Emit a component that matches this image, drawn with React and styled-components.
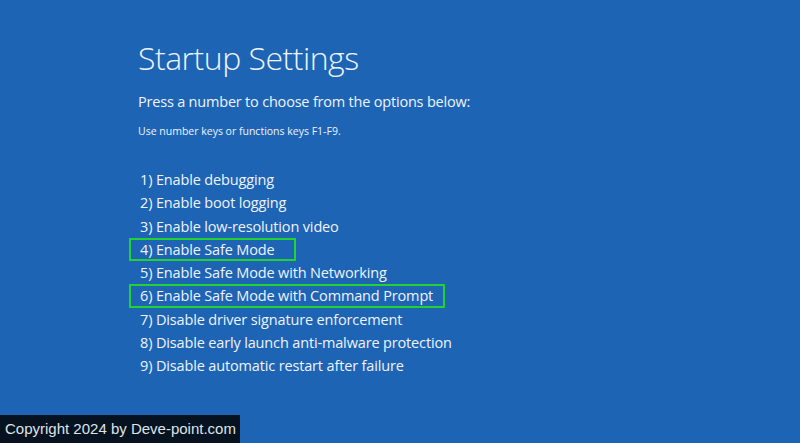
import styled, { createGlobalStyle } from 'styled-components';

const Global = createGlobalStyle`
  html, body { margin: 0; padding: 0; }
  body { background: #1e64b4; }
`;

const Screen = styled.div`
  position: relative;
  width: 800px;
  height: 443px;
  overflow: hidden;
  background: #1e64b4;
  color: #eef3fa;
  font-family: "Open Sans", "Noto Sans", sans-serif;
  padding: 33px 0 0 138px;
  box-sizing: border-box;
`;

const Title = styled.h1`
  margin: 0;
  font-size: 32px;
  font-weight: 300;
  line-height: 50px;
  letter-spacing: -0.5px;
`;

const Prompt = styled.p`
  margin: 8px 0 0;
  font-size: 14.5px;
  font-weight: 400;
  line-height: 22px;
  letter-spacing: -0.2px;
`;

const Hint = styled.p`
  margin: 10px 0 0;
  font-size: 10.5px;
  line-height: 16px;
`;

const Options = styled.ol`
  list-style: none;
  margin: 29px 0 0;
  padding: 0;
`;

const Option = styled.li`
  width: fit-content;
  margin-left: -9px;
  padding: 0 ${(p) => p.$pad || 0}px 0 9px;
  border: 2px solid ${(p) => (p.$hl ? '#22d232' : 'transparent')};
  font-size: 14.5px;
  line-height: 19.25px;
  letter-spacing: -0.15px;
`;

const Watermark = styled.div`
  position: absolute;
  left: 0;
  bottom: 0;
  width: 240px;
  height: 28px;
  background: #06121f;
  color: #dfe3e8;
  font-family: "Liberation Sans", Arial, sans-serif;
  font-size: 15px;
  line-height: 28px;
  padding-left: 5px;
  box-sizing: border-box;
`;

const items = [
  { t: '1) Enable debugging' },
  { t: '2) Enable boot logging' },
  { t: '3) Enable low-resolution video' },
  { t: '4) Enable Safe Mode', hl: true, pad: 19 },
  { t: '5) Enable Safe Mode with Networking' },
  { t: '6) Enable Safe Mode with Command Prompt', hl: true, pad: 10 },
  { t: '7) Disable driver signature enforcement' },
  { t: '8) Disable early launch anti-malware protection' },
  { t: '9) Disable automatic restart after failure' },
];

export default function App() {
  return (
    <Screen>
      <Global />
      <Title>Startup Settings</Title>
      <Prompt>Press a number to choose from the options below:</Prompt>
      <Hint>Use number keys or functions keys F1-F9.</Hint>
      <Options>
        {items.map((it) => (
          <Option key={it.t} $hl={it.hl} $pad={it.pad}>
            {it.t}
          </Option>
        ))}
      </Options>
      <Watermark>Copyright 2024 by Deve-point.com</Watermark>
    </Screen>
  );
}
